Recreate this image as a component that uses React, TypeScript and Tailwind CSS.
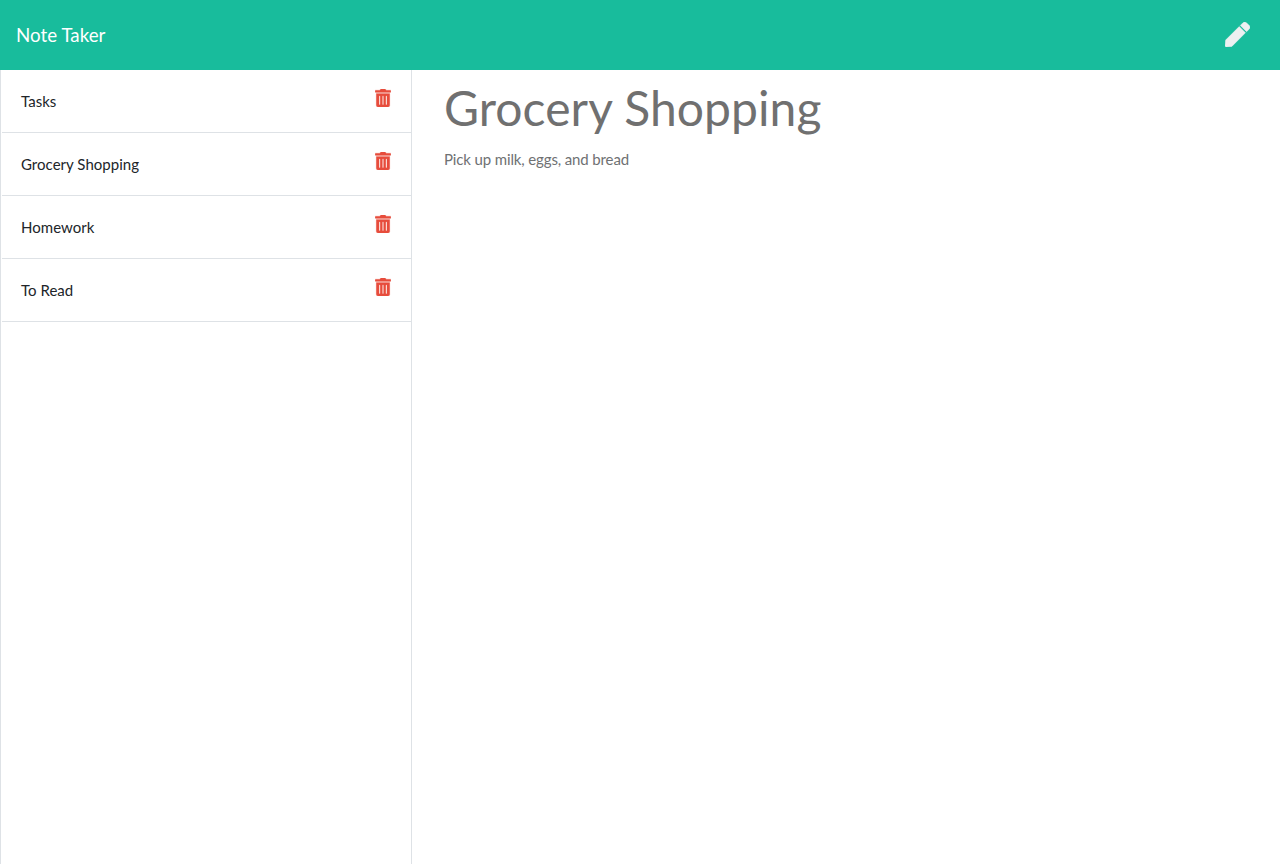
import React from 'react';
import { FaPen, FaTrashAlt } from 'react-icons/fa';

const notes = ['Tasks', 'Grocery Shopping', 'Homework', 'To Read'];

function NoteRow({ title }: { title: string }) {
  return (
    <li className="flex justify-between h-[63px] border-b border-[#dee2e6] pl-[19px] pr-[20px] ml-px">
      <span className="pt-[20px] text-[15px] leading-[23px] tracking-[0.03px] text-[#212529]">{title}</span>
      <FaTrashAlt className="mt-[19px] w-[16px] h-[18px] text-[#e74c3c] stroke-[6px]" />
    </li>
  );
}

export default function App() {
  return (
    <div className="h-[864px] flex flex-col bg-white font-['Lato',sans-serif] overflow-hidden">
      <nav className="h-[70px] shrink-0 bg-[#18bc9c] flex items-center justify-between pl-[16px] pr-[30px]">
        <span className="text-[18.75px] leading-[28px] -mt-px tracking-[0.02px] text-white">Note Taker</span>
        <FaPen className="w-[25px] h-[25px] -mt-px text-[#ecf0f1] stroke-[10px]" />
      </nav>
      <div className="flex flex-1 min-h-0">
        <ul className="w-[412px] shrink-0 border-l border-r border-[#dee2e6]">
          {notes.map((n) => (
            <NoteRow key={n} title={n} />
          ))}
        </ul>
        <main className="flex-1 pl-[32px] pt-[10px]">
          <h1 className="text-[48px] leading-[56px] tracking-[0.08px] text-[#707070] font-normal">Grocery Shopping</h1>
          <p className="mt-[12px] text-[15px] leading-[22px] tracking-[-0.13px] text-[#6f7173]">Pick up milk, eggs, and bread</p>
        </main>
      </div>
    </div>
  );
}
